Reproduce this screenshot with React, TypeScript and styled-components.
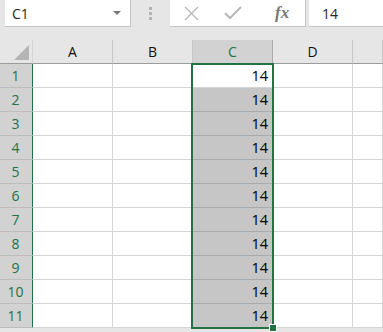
import React from "react";
import styled, { createGlobalStyle } from "styled-components";

const GlobalStyle = createGlobalStyle`
  html, body {
    margin: 0;
    padding: 0;
    background: #e6e6e6;
  }
`;

const Page = styled.div`
  width: 383px;
  height: 332px;
  overflow: hidden;
  background: #e6e6e6;
  font-family: "Open Sans", "Noto Sans", sans-serif;
  position: relative;
`;

const FormulaBar = styled.div`
  display: flex;
  align-items: flex-start;
  height: 40px;
  padding-left: 5px;
`;

const NameBox = styled.div`
  width: 126px;
  height: 27px;
  box-sizing: border-box;
  background: #fff;
  border-right: 1px solid #c6c6c6;
  border-bottom: 1px solid #c6c6c6;
  display: flex;
  align-items: center;
  justify-content: space-between;
  padding: 0 9px 0 7px;
  font-size: 14px;
  color: #262626;
`;

const Caret = styled.span`
  width: 0;
  height: 0;
  border-left: 4px solid transparent;
  border-right: 4px solid transparent;
  border-top: 4px solid #7a7a7a;
`;

const Grip = styled.div`
  width: 39px;
  height: 27px;
  display: flex;
  flex-direction: column;
  align-items: center;
  justify-content: center;
  gap: 2px;
  padding-bottom: 1px;
  box-sizing: border-box;

  span {
    width: 3px;
    height: 3px;
    background: #b4b4b4;
  }
`;

const ButtonBox = styled.div`
  width: 136px;
  height: 27px;
  box-sizing: border-box;
  background: #fff;
  border-right: 1px solid #c6c6c6;
  border-bottom: 1px solid #c6c6c6;
  display: flex;
  align-items: center;
  padding-left: 14px;
  gap: 25px;
`;

const Fx = styled.span`
  font-family: "Liberation Serif", serif;
  font-style: italic;
  font-weight: bold;
  font-size: 17px;
  color: #777;
  margin-left: 8px;
`;

const Input = styled.div`
  flex: 1;
  height: 27px;
  margin-left: 3px;
  box-sizing: border-box;
  background: #fff;
  border-bottom: 1px solid #c6c6c6;
  display: flex;
  align-items: center;
  padding-left: 13px;
  font-size: 14px;
  color: #262626;
`;

const Sheet = styled.div`
  position: relative;
  display: grid;
  grid-template-columns: 33px 80px 80px 80px 80px 30px;
  grid-auto-rows: 24px;
`;

const Corner = styled.div`
  border-right: 1px solid #d4d4d4;
  border-bottom: 1px solid #9b9b9b;
  display: flex;
  align-items: flex-end;
  justify-content: flex-end;
  padding: 0 3px 3px 0;

  span {
    width: 0;
    height: 0;
    border-left: 15px solid transparent;
    border-bottom: 15px solid #b4b4b4;
  }
`;

const ColHead = styled.div<{ $selected?: boolean }>`
  box-sizing: border-box;
  background: ${(p) => (p.$selected ? "#d2d2d2" : "#e6e6e6")};
  border-right: 1px solid ${(p) => (p.$selected ? "#ababab" : "#c6c6c6")};
  border-bottom: 1px solid #9b9b9b;
  display: flex;
  align-items: center;
  justify-content: center;
  font-size: 14px;
  color: ${(p) => (p.$selected ? "#217346" : "#111")};
  padding-bottom: 1px;
`;

const RowHead = styled.div`
  box-sizing: border-box;
  background: #d2d2d2;
  border-bottom: 1px solid #bdbdbd;
  border-right: 2px solid #217346;
  margin-right: -1px;
  display: flex;
  align-items: center;
  justify-content: center;
  padding-right: 1px;
  font-size: 14px;
  color: #217346;
`;

const Cell = styled.div<{ $shaded?: boolean }>`
  box-sizing: border-box;
  background: ${(p) => (p.$shaded ? "#c6c6c6" : "#fff")};
  border-right: 1px solid #d4d4d4;
  border-bottom: 1px solid ${(p) => (p.$shaded ? "#ababab" : "#d4d4d4")};
  display: flex;
  align-items: flex-end;
  justify-content: flex-end;
  padding: 0 4px 0 0;
  font-family: "Open Sans", "Noto Sans", sans-serif;
  font-size: 14.5px;
  color: #000;
  line-height: 22px;
`;

const Selection = styled.div`
  position: absolute;
  left: 191px;
  top: 23px;
  width: 83px;
  height: 266px;
  box-sizing: border-box;
  border: 2px solid #217346;
  pointer-events: none;
`;

const Handle = styled.div`
  position: absolute;
  right: -5px;
  bottom: -5px;
  width: 6px;
  height: 6px;
  background: #217346;
  border: 1px solid #fff;
`;

const XIcon = () => (
  <svg width="15" height="15" viewBox="0 0 15 15">
    <path d="M1 1 L14 14 M14 1 L1 14" stroke="#b8b8b8" strokeWidth="1.3" fill="none" />
  </svg>
);

const CheckIcon = () => (
  <svg width="18" height="14" viewBox="0 0 18 14">
    <path d="M1 7 L6 12 L17 1" stroke="#b8b8b8" strokeWidth="2" fill="none" />
  </svg>
);

const columns = ["A", "B", "C", "D", ""];
const rows = Array.from({ length: 11 }, (_, i) => i + 1);

const App = () => {
  return (
    <Page>
      <GlobalStyle />
      <FormulaBar>
        <NameBox>
          C1
          <Caret />
        </NameBox>
        <Grip>
          <span />
          <span />
          <span />
        </Grip>
        <ButtonBox>
          <XIcon />
          <CheckIcon />
          <Fx>fx</Fx>
        </ButtonBox>
        <Input>14</Input>
      </FormulaBar>
      <Sheet>
        <Corner>
          <span />
        </Corner>
        {columns.map((c, i) => (
          <ColHead key={i} $selected={c === "C"}>
            {c}
          </ColHead>
        ))}
        {rows.map((r) => (
          <React.Fragment key={r}>
            <RowHead>{r}</RowHead>
            {columns.map((c, i) => (
              <Cell key={i} $shaded={c === "C" && r > 1}>
                {c === "C" ? "14" : ""}
              </Cell>
            ))}
          </React.Fragment>
        ))}
        <Selection>
          <Handle />
        </Selection>
      </Sheet>
    </Page>
  );
};

export default App;
